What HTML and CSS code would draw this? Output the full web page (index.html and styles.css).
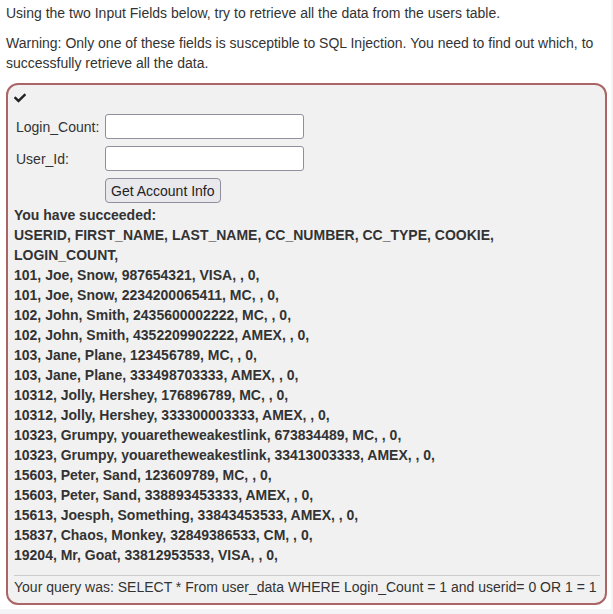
FILE: index.html
```
<!DOCTYPE html>
<html>
<head>
<meta charset="utf-8">
<link rel="stylesheet" href="styles.css">
</head>
<body>
<div class="page">
  <p class="intro">Using the two Input Fields below, try to retrieve all the data from the users table.</p>
  <p class="intro">Warning: Only one of these fields is susceptible to SQL Injection. You need to find out which, to successfully retrieve all the data.</p>
  <div class="attack">
    <svg class="check" viewBox="0 0 512 512" width="12" height="12"><path d="M173.898 439.404l-166.4-166.4c-9.997-9.997-9.997-26.206 0-36.204l36.203-36.204c9.997-9.998 26.207-9.998 36.204 0L192 312.69 432.095 72.596c9.997-9.997 26.207-9.997 36.204 0l36.203 36.204c9.997 9.997 9.997 26.206 0 36.204l-294.4 294.401c-9.998 9.997-26.207 9.997-36.204-.001z"/></svg>
    <form class="form">
      <label class="lbl">Login_Count:</label>
      <input class="field" type="text">
      <label class="lbl">User_Id:</label>
      <input class="field" type="text">
      <span></span>
      <button class="btn" type="button">Get Account Info</button>
    </form>
    <div class="result">
      You have succeeded:<br>
      USERID, FIRST_NAME, LAST_NAME, CC_NUMBER, CC_TYPE, COOKIE, LOGIN_COUNT, <br>
      101, Joe, Snow, 987654321, VISA, , 0, <br>
      101, Joe, Snow, 2234200065411, MC, , 0, <br>
      102, John, Smith, 2435600002222, MC, , 0, <br>
      102, John, Smith, 4352209902222, AMEX, , 0, <br>
      103, Jane, Plane, 123456789, MC, , 0, <br>
      103, Jane, Plane, 333498703333, AMEX, , 0, <br>
      10312, Jolly, Hershey, 176896789, MC, , 0, <br>
      10312, Jolly, Hershey, 333300003333, AMEX, , 0, <br>
      10323, Grumpy, youaretheweakestlink, 673834489, MC, , 0, <br>
      10323, Grumpy, youaretheweakestlink, 33413003333, AMEX, , 0, <br>
      15603, Peter, Sand, 123609789, MC, , 0, <br>
      15603, Peter, Sand, 338893453333, AMEX, , 0, <br>
      15613, Joesph, Something, 33843453533, AMEX, , 0, <br>
      15837, Chaos, Monkey, 32849386533, CM, , 0, <br>
      19204, Mr, Goat, 33812953533, VISA, , 0, <br>
    </div>
    <hr class="sep">
    <div class="query">Your query was: SELECT * From user_data WHERE Login_Count = 1 and userid= 0 OR 1 = 1</div>
  </div>
</div>
</body>
</html>
```

FILE: styles.css
```
html, body {
  margin: 0;
  padding: 0;
  background: #f4f4f7;
}
body {
  font-family: "Liberation Sans", Arial, sans-serif;
  font-size: 14px;
  line-height: 20px;
  color: #333;
}
.page {
  width: 605px;
  padding: 3px 0 4px 6px;
  background: #fff;
}
.intro {
  margin: 0 0 10px 0;
}
.attack {
  width: 601px;
  margin-top: 2px;
  border: 2px solid #ab6565;
  border-radius: 12px;
  background: #f1f1f1;
  padding: 5px 0 6px 6px;
  box-sizing: border-box;
}
.check {
  display: block;
  fill: #222;
  margin: 2px 0 0 0;
}
.form {
  display: grid;
  grid-template-columns: 91px 199px;
  row-gap: 7px;
  margin: 10px 0 0 0;
  align-items: center;
}
.lbl {
  padding-left: 2px;
}
.field {
  box-sizing: border-box;
  width: 199px;
  height: 25px;
  margin: 0;
  border: 1px solid #8f8f9d;
  border-radius: 3px;
  background: #fff;
}
.btn {
  justify-self: start;
  height: 25px;
  padding: 0 5px;
  margin: 0;
  font: inherit;
  color: #222;
  background: #e9e9ed;
  border: 1px solid #8f8f9d;
  border-radius: 4px;
}
.result {
  font-weight: bold;
  margin-top: 2px;
  width: 490px;
}
.sep {
  margin: 10px 5px 0 0;
  border: 0;
  border-top: 1px solid #ccc;
}
.query {
  margin-top: 1px;
}
```
